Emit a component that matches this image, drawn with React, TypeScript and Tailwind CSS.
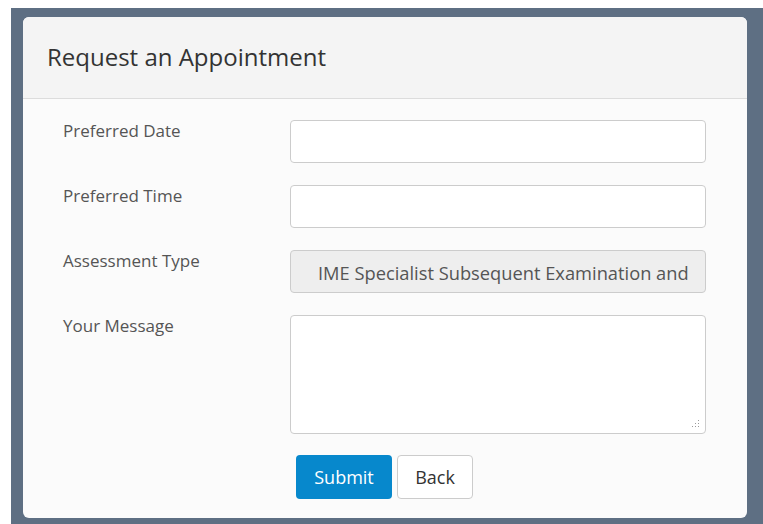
import React from "react";

const font = { fontFamily: '"Open Sans", "Liberation Sans", sans-serif' };

function Row({ label, children }: { label: string; children: React.ReactNode }) {
  return (
    <div className="flex items-start">
      <div className="w-[227px] shrink-0 text-[17px] leading-[22px] text-[#555]">{label}</div>
      {children}
    </div>
  );
}

function ResizeGrip() {
  return (
    <svg className="absolute right-[5px] bottom-[5px]" width="8" height="8" viewBox="0 0 8 8">
      <g fill="#9a9a9a">
        <rect x="6" y="0" width="1" height="1" />
        <rect x="3" y="3" width="1" height="1" />
        <rect x="6" y="3" width="1" height="1" />
        <rect x="0" y="6" width="1" height="1" />
        <rect x="3" y="6" width="1" height="1" />
        <rect x="6" y="6" width="1" height="1" />
      </g>
    </svg>
  );
}

export default function App() {
  return (
    <div className="min-h-screen bg-white pl-[11px] pt-[8px]" style={font}>
      <div className="h-[516px] bg-[#5e6f83] pl-[12px] pr-[16px] pt-[9px] pb-[6px]">
        <div className="h-[501px] overflow-hidden rounded-[6px] bg-[#fbfbfb]">
          <div className="flex h-[82px] items-center border-b border-[#dcdcdc] bg-[#f4f4f4] px-[24px] pb-[2px]">
            <h1 className="text-[24px] leading-[30px] text-[#333]">Request an Appointment</h1>
          </div>
          <div className="flex flex-col gap-[22px] pl-[40px] pr-[41px] pt-[21px]">
            <Row label="Preferred Date">
              <input className="h-[43px] w-[416px] rounded-[4px] border border-[#cccccc] bg-white px-3 outline-none" />
            </Row>
            <Row label="Preferred Time">
              <input className="h-[43px] w-[416px] rounded-[4px] border border-[#cccccc] bg-white px-3 outline-none" />
            </Row>
            <Row label="Assessment Type">
              <div className="flex h-[43px] w-[416px] items-center overflow-hidden rounded-[4px] border border-[#cccccc] bg-[#eeeeee] pl-[27px] pr-[16px]">
                <div className="overflow-hidden whitespace-nowrap pt-[2px] text-[18.3px] text-[#555]">
                  IME Specialist Subsequent Examination and Report
                </div>
              </div>
            </Row>
            <Row label="Your Message">
              <div className="relative h-[119px] w-[416px] rounded-[4px] border border-[#cccccc] bg-white">
                <ResizeGrip />
              </div>
            </Row>
          </div>
          <div className="mt-[21px] flex gap-[5px] pl-[273px]">
            <button className="h-[44px] w-[96px] rounded-[4px] bg-[#0788cc] text-[18px] text-white">Submit</button>
            <button className="h-[44px] w-[76px] rounded-[4px] border border-[#cccccc] bg-white text-[18px] text-[#333]">Back</button>
          </div>
        </div>
      </div>
    </div>
  );
}
